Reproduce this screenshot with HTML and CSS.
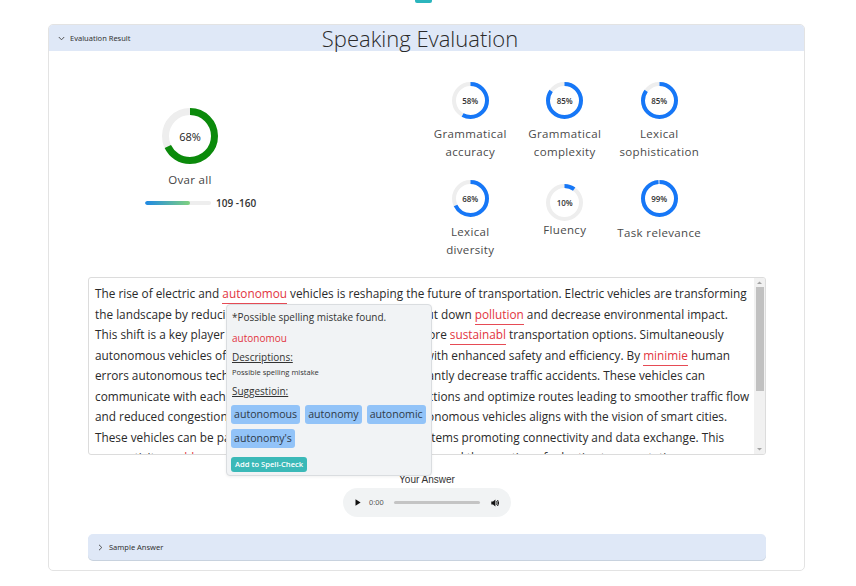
FILE: index.html
```html
<!DOCTYPE html>
<html>
<head>
<meta charset="utf-8">
<title>Speaking Evaluation</title>
<link rel="stylesheet" href="styles.css">
</head>
<body>
<div class="top-tab"></div>
<section class="panel">
  <header class="panel-head">
    <div class="head-left">
      <svg class="chev" width="7" height="5" viewBox="0 0 7 5"><path d="M0.8 1 L3.5 3.8 L6.2 1" fill="none" stroke="#444" stroke-width="0.9"/></svg>
      <span>Evaluation Result</span>
    </div>
    <h1 class="title">Speaking Evaluation</h1>
    <div></div>
  </header>
  <div class="panel-body">
    <div class="scores">
      <div class="overall">
        <div class="ring ring--lg">
          <svg width="56" height="56" viewBox="0 0 56 56"><circle cx="28" cy="28" r="24.5" fill="none" stroke="#eeeeee" stroke-width="7"/><circle cx="28" cy="28" r="24.5" fill="none" stroke="#0b8a0b" stroke-width="7" pathLength="100" stroke-dasharray="68 100" transform="rotate(-90 28 28)"/></svg>
          <span class="ring-val ring-val--lg">68%</span>
        </div>
        <div class="overall-label">Ovar all</div>
        <div class="band">
          <div class="band-bar"><div class="band-fill" style="width:68%"></div></div>
          <span class="band-text">109 -160</span>
        </div>
      </div>
      <div class="metrics">
        <div class="metric">
          <div class="ring"><svg width="37" height="37" viewBox="0 0 37 37"><circle cx="18.5" cy="18.5" r="16.5" fill="none" stroke="#eeeeee" stroke-width="4"/><circle cx="18.5" cy="18.5" r="16.5" fill="none" stroke="#1677f7" stroke-width="4" pathLength="100" stroke-dasharray="58 100" transform="rotate(-90 18.5 18.5)"/></svg><span class="ring-val">58%</span></div>
          <div class="metric-label">Grammatical<br>accuracy</div>
        </div>
        <div class="metric">
          <div class="ring"><svg width="37" height="37" viewBox="0 0 37 37"><circle cx="18.5" cy="18.5" r="16.5" fill="none" stroke="#eeeeee" stroke-width="4"/><circle cx="18.5" cy="18.5" r="16.5" fill="none" stroke="#1677f7" stroke-width="4" pathLength="100" stroke-dasharray="85 100" transform="rotate(-90 18.5 18.5)"/></svg><span class="ring-val">85%</span></div>
          <div class="metric-label">Grammatical<br>complexity</div>
        </div>
        <div class="metric">
          <div class="ring"><svg width="37" height="37" viewBox="0 0 37 37"><circle cx="18.5" cy="18.5" r="16.5" fill="none" stroke="#eeeeee" stroke-width="4"/><circle cx="18.5" cy="18.5" r="16.5" fill="none" stroke="#1677f7" stroke-width="4" pathLength="100" stroke-dasharray="85 100" transform="rotate(-90 18.5 18.5)"/></svg><span class="ring-val">85%</span></div>
          <div class="metric-label">Lexical<br>sophistication</div>
        </div>
        <div class="metric">
          <div class="ring"><svg width="37" height="37" viewBox="0 0 37 37"><circle cx="18.5" cy="18.5" r="16.5" fill="none" stroke="#eeeeee" stroke-width="4"/><circle cx="18.5" cy="18.5" r="16.5" fill="none" stroke="#1677f7" stroke-width="4" pathLength="100" stroke-dasharray="68 100" transform="rotate(-90 18.5 18.5)"/></svg><span class="ring-val">68%</span></div>
          <div class="metric-label">Lexical<br>diversity</div>
        </div>
        <div class="metric metric--fluency">
          <div class="ring"><svg width="37" height="37" viewBox="0 0 37 37"><circle cx="18.5" cy="18.5" r="16.5" fill="none" stroke="#eeeeee" stroke-width="4"/><circle cx="18.5" cy="18.5" r="16.5" fill="none" stroke="#1677f7" stroke-width="4" pathLength="100" stroke-dasharray="10 100" transform="rotate(-90 18.5 18.5)"/></svg><span class="ring-val">10%</span></div>
          <div class="metric-label">Fluency</div>
        </div>
        <div class="metric metric--task">
          <div class="ring"><svg width="37" height="37" viewBox="0 0 37 37"><circle cx="18.5" cy="18.5" r="16.5" fill="none" stroke="#eeeeee" stroke-width="4"/><circle cx="18.5" cy="18.5" r="16.5" fill="none" stroke="#1677f7" stroke-width="4" pathLength="100" stroke-dasharray="99 100" transform="rotate(-90 18.5 18.5)"/></svg><span class="ring-val">99%</span></div>
          <div class="metric-label">Task relevance</div>
        </div>
      </div>
    </div>

    <div class="answer">
      <div class="answer-box">
        <div class="essay">The rise of electric and <span class="err">autonomou</span> vehicles is reshaping the future of transportation. Electric vehicles are transforming<br>the landscape by reducing harmful gas emissions that help cut down <span class="err">pollution</span> and decrease environmental impact.<br>This shift is a key player in the change toward greener and more <span class="err">sustainabl</span> transportation options. Simultaneously<br>autonomous vehicles offer a greater degree of convenience with enhanced safety and efficiency. By <span class="err">minimie</span> human<br>errors autonomous technology holds the potential to significantly decrease traffic accidents. These vehicles can<br>communicate with each other to better coordinate at intersections and optimize routes leading to smoother traffic flow<br>and reduced congestion. Furthermore, the integration of autonomous vehicles aligns with the vision of smart cities.<br>These vehicles can be part of an intelligent transportation systems promoting connectivity and data exchange. This<br>connectivity <span class="err">enable</span> smarter decision making in urban planning and the creation of adaptive transportation</div>
        <div class="scroll">
          <svg width="11" height="9" viewBox="0 0 11 9"><path d="M3 6 L5.5 3.5 L8 6 Z" fill="#a3a3a3"/></svg>
          <div class="scroll-track"><div class="scroll-thumb"></div></div>
          <svg width="11" height="9" viewBox="0 0 11 9"><path d="M3 3 L5.5 5.5 L8 3 Z" fill="#a3a3a3"/></svg>
        </div>
      </div>
      <div class="popup">
        <p class="pop-title">*Possible spelling mistake found.</p>
        <p class="pop-word">autonomou</p>
        <p class="pop-head">Descriptions:</p>
        <p class="pop-desc">Possible spelling mistake</p>
        <p class="pop-head pop-head--sug">Suggestioin:</p>
        <div class="chips">
          <span class="chip">autonomous</span>
          <span class="chip">autonomy</span>
          <span class="chip">autonomic</span>
          <span class="chip">autonomy's</span>
        </div>
        <button class="add-btn">Add to Spell-Check</button>
      </div>
    </div>

    <div class="your-answer">Your Answer</div>
    <div class="player">
      <svg class="play" width="6" height="7" viewBox="0 0 6 7"><path d="M0.5 0.3 L5.6 3.5 L0.5 6.7 Z" fill="#111"/></svg>
      <span class="time">0:00</span>
      <div class="progress"></div>
      <svg class="vol" width="9" height="8" viewBox="0 0 9 8"><path d="M0.3 2.6 H2 L4.4 0.5 V7.5 L2 5.4 H0.3 Z" fill="#111"/><path d="M5.6 2.2 Q6.7 4 5.6 5.8" fill="none" stroke="#111" stroke-width="1"/><path d="M6.6 1 Q8.6 4 6.6 7" fill="none" stroke="#111" stroke-width="1"/></svg>
    </div>

    <div class="sample">
      <svg class="chev-r" width="5" height="7" viewBox="0 0 5 7"><path d="M1 0.8 L3.8 3.5 L1 6.2" fill="none" stroke="#444" stroke-width="0.9"/></svg>
      <span>Sample Answer</span>
    </div>
  </div>
</section>
</body>
</html>
```
FILE: styles.css
```css
* { box-sizing: border-box; }

body {
  margin: 0;
  background: #ffffff;
  font-family: "Open Sans", "Noto Sans", sans-serif;
  color: #333333;
}

.top-tab {
  width: 17px;
  height: 3px;
  margin-left: 415px;
  background: #2bb5bd;
  border-radius: 0 0 2px 2px;
}

.panel {
  margin: 21px 51px 0 48px;
  height: 547px;
  border: 1px solid #e3e3e3;
  border-radius: 5px;
  overflow: hidden;
}

.panel-head {
  display: grid;
  grid-template-columns: 1fr auto 1fr;
  align-items: center;
  height: 26px;
  padding: 0 22px 0 9px;
  background: #dfe8f7;
}

.head-left {
  display: flex;
  align-items: center;
  gap: 5px;
  font-family: "Noto Sans", sans-serif;
  font-size: 7.5px;
  color: #333;
}

.title {
  margin: 0;
  font-family: "Open Sans", sans-serif;
  font-weight: 300;
  font-size: 22px;
  line-height: 26px;
  color: #2a2a2a;
}

.panel-body {
  padding: 0 38px 9px 39px;
}

.scores {
  display: flex;
  align-items: flex-start;
}

.overall {
  width: 90px;
  margin: 57px 0 0 57px;
  display: flex;
  flex-direction: column;
  align-items: center;
}

.ring {
  display: grid;
  place-items: center;
}
.ring > * { grid-area: 1 / 1; }
.ring svg { display: block; }

.ring-val {
  font-size: 8px;
  font-weight: 600;
  color: #333;
}
.ring-val--lg {
  font-size: 11px;
  font-weight: 500;
  color: #222;
}

.overall-label {
  margin-top: 8px;
  font-size: 11.5px;
  line-height: 16px;
  color: #444;
  letter-spacing: 0.3px;
}

.band {
  margin-top: 8px;
  align-self: flex-start;
  display: flex;
  align-items: center;
  gap: 5px;
  white-space: nowrap;
  line-height: 14px;
}
.band-bar {
  width: 66px;
  height: 4px;
  border-radius: 2px;
  background: #eeeeee;
  overflow: hidden;
}
.band-fill {
  height: 100%;
  border-radius: 2px;
  background: linear-gradient(90deg, #1e88e5, #7fd17f);
}
.band-text {
  font-size: 10px;
  font-weight: 600;
  color: #333;
}

.metrics {
  margin: 31px 0 0 188px;
  display: grid;
  grid-template-columns: repeat(3, 94.5px);
  row-gap: 19px;
}

.metric {
  display: flex;
  flex-direction: column;
  align-items: center;
}
.metric-label {
  margin-top: 6px;
  font-size: 11.5px;
  line-height: 18px;
  letter-spacing: 0.35px;
  text-align: center;
  color: #4a4a4a;
}
.metric--fluency { margin-top: 4px; }
.metric--fluency .metric-label { margin-top: 0; }
.metric--task .metric-label { margin-top: 7px; }

.answer {
  position: relative;
  margin-top: 18px;
}

.answer-box {
  display: flex;
  height: 178px;
  border: 1px solid #dcdcdc;
  border-radius: 3px;
  overflow: hidden;
}

.essay {
  flex: 1;
  padding: 5px 0 0 6px;
  white-space: nowrap;
  overflow: hidden;
  font-size: 11.8px;
  line-height: 20.5px;
  color: #2a2a2a;
}

.err {
  color: #e2343e;
  border-bottom: 1.5px solid #e64b55;
  padding-bottom: 2px;
}

.scroll {
  width: 11px;
  display: flex;
  flex-direction: column;
  background: #f1f1f1;
}
.scroll svg { display: block; }
.scroll-track {
  flex: 1;
  padding: 0 1.5px;
}
.scroll-thumb {
  height: 104px;
  margin-top: 0;
  background: #c1c1c1;
}

.popup {
  position: absolute;
  left: 138px;
  top: 27px;
  width: 206px;
  height: 172px;
  padding: 5px 4px 5px 4px;
  background: #f1f3f5;
  border: 1px solid #dadde0;
  border-radius: 4px;
  box-shadow: 0 1px 3px rgba(0,0,0,0.06);
}
.popup p { margin: 0; padding-left: 1px; }

.pop-title {
  font-size: 10px;
  line-height: 14px;
  color: #333;
}
.pop-word {
  margin-top: 7px !important;
  font-size: 10px;
  line-height: 14px;
  color: #e2343e;
}
.pop-head {
  margin-top: 5px !important;
  font-size: 10px;
  line-height: 14px;
  color: #333;
  text-decoration: underline;
  text-underline-offset: 1px;
}
.pop-desc {
  margin-top: 3px !important;
  font-size: 7.5px;
  line-height: 10px;
  color: #333;
}
.pop-head--sug { margin-top: 7px !important; }

.chips {
  margin-top: 7px;
  display: flex;
  flex-wrap: wrap;
  gap: 5px;
}
.chip {
  height: 19px;
  padding: 0 3px;
  border-radius: 3px;
  background: #92c3f8;
  font-size: 10.6px;
  line-height: 19px;
  color: #2e3a48;
}

.add-btn {
  display: block;
  margin-top: 9px;
  height: 15px;
  padding: 0 4px;
  border: none;
  border-radius: 3px;
  background: #3bb9b8;
  color: #ffffff;
  font-family: "Open Sans", sans-serif;
  font-size: 7.6px;
  font-weight: 600;
  line-height: 15px;
}

.your-answer {
  margin-top: 19px;
  text-align: center;
  font-family: "Liberation Sans", Arial, sans-serif;
  font-size: 10px;
  line-height: 12px;
  color: #333;
}

.player {
  margin: 2px auto 0;
  width: 168px;
  height: 29px;
  border-radius: 15px;
  background: #f1f3f4;
  display: flex;
  align-items: center;
  padding: 0 11px 0 12px;
}
.play { display: block; }
.time {
  margin-left: 8px;
  font-family: "Liberation Sans", Arial, sans-serif;
  font-size: 7.5px;
  color: #555;
}
.progress {
  margin-left: 10px;
  width: 86px;
  height: 2.5px;
  border-radius: 2px;
  background: #c4c4c4;
}
.vol { display: block; margin-left: auto; }

.sample {
  margin-top: 17px;
  height: 26px;
  display: flex;
  align-items: center;
  gap: 6px;
  padding-left: 10px;
  background: #dfe8f7;
  border-radius: 5px;
  box-shadow: 0 1px 0 #c8d2de;
  font-family: "Noto Sans", sans-serif;
  font-size: 7.5px;
  color: #333;
}
.chev-r { display: block; }
```
